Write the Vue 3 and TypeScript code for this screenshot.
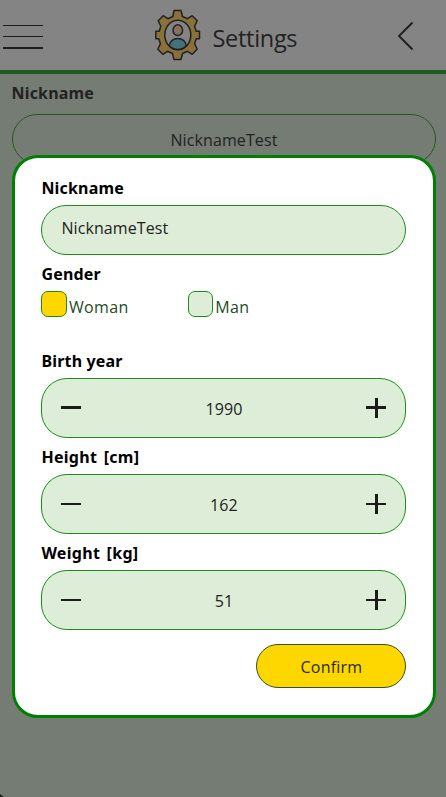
<script setup lang="ts">
import { ref } from 'vue'

interface Stepper {
  label: string
  value: number
  strokeTop: number
  stroke: number
}

const nickname = ref('NicknameTest')
const gender = ref<'Woman' | 'Man'>('Woman')
const genders = ['Woman', 'Man'] as const
const steppers = ref<Stepper[]>([
  { label: 'Birth year', value: 1990, strokeTop: 8, stroke: 3 },
  { label: 'Height [cm]', value: 162, strokeTop: 9, stroke: 2 },
  { label: 'Weight [kg]', value: 51, strokeTop: 9, stroke: 2 },
])
</script>

<template>
  <div class="page">
    <header class="bar">
      <svg class="menu" width="40" height="24" viewBox="0 0 40 24" shape-rendering="crispEdges">
        <rect width="40" height="1" />
        <rect y="11" width="40" height="1" />
        <rect y="22" width="40" height="2" />
      </svg>
      <div class="title">
        <svg class="gear" width="46" height="52" viewBox="0 0 46 52">
          <path
            d="M19 1.5h7l1.500 6 5 2.200 4.700-3 5 5-2.600 5.500 1.600 5h3.300v7.600h-3.300l-1.600 5 2.600 5.500-5 5-4.700-3-5 2.200-1.500 6h-7l-1.500-6-5-2.200-4.700 3-5-5 2.600-5.500-1.600-5H.8v-7.600h3.400l1.600-5-2.600-5.500 5-5 4.700 3 5-2.200z"
            class="cog"
          />
          <ellipse cx="22.8" cy="26" rx="13" ry="14.8" class="hole" />
          <ellipse cx="22.8" cy="21.2" rx="4.8" ry="5.4" class="head" />
          <path d="M14.2 36.6c1-4.6 4.200-7.200 8.600-7.200s7.600 2.600 8.600 7.200c-2.400 2.700-5.300 4-8.600 4s-6.200-1.300-8.600-4z" class="body" />
        </svg>
        <h1>Settings</h1>
      </div>
      <svg class="back" width="18" height="30" viewBox="0 0 18 30">
        <path d="M15.500 1.500 2 15l13.500 13.500" />
      </svg>
    </header>

    <main class="backdrop">
      <div class="label dim">Nickname</div>
      <div class="dim-field"><span class="nick">{{ nickname }}</span></div>
    </main>

    <section class="modal">
      <div class="label first">Nickname</div>
      <div class="field name"><span class="nick">{{ nickname }}</span></div>
      <div class="label">Gender</div>
      <div class="genders">
        <div v-for="g in genders" :key="g" class="option" @click="gender = g">
          <span class="check" :class="{ on: gender === g }"></span>
          <span class="option-text">{{ g }}</span>
        </div>
      </div>
      <template v-for="s in steppers" :key="s.label">
        <div class="label" :class="{ unit: s.label.includes('[') }">{{ s.label }}</div>
        <div class="field stepper">
          <svg width="20" height="20" viewBox="0 0 20 20" shape-rendering="crispEdges" @click="s.value--">
            <rect :y="s.strokeTop" width="20" :height="s.stroke" />
          </svg>
          <span class="value">{{ s.value }}</span>
          <svg width="20" height="20" viewBox="0 0 20 20" shape-rendering="crispEdges" @click="s.value++">
            <rect :y="s.strokeTop" width="20" :height="s.stroke" />
            <rect x="9" width="3" height="20" />
          </svg>
        </div>
      </template>
      <button class="confirm" type="button">Confirm</button>
    </section>
    <svg class="corner" width="4" height="4" viewBox="0 0 4 4"><path d="M0 1v3h4z" /></svg>
  </div>
</template>

<style>
body {
  margin: 0;
  overflow: hidden;
}
</style>

<style scoped>
.page {
  position: relative;
  box-sizing: border-box;
  width: 446px;
  height: 797px;
  overflow: hidden;
  background: #757c74;
  color: #222;
  font-family: "Open Sans", "Noto Sans", sans-serif;
  font-size: 16px;
}
.bar {
  box-sizing: border-box;
  display: flex;
  align-items: flex-start;
  justify-content: space-between;
  height: 74px;
  padding: 0 31px 0 3px;
  border-bottom: 4px solid #215a1f;
  background: #848484;
}
.menu {
  margin-top: 25px;
  fill: #1d1d1d;
}
.title {
  display: flex;
  align-items: flex-start;
  width: 145px;
  margin-left: 14px;
}
.gear {
  flex: none;
  margin-top: 9px;
}
.gear > * {
  stroke: #222;
  stroke-width: 1.5;
  stroke-linejoin: round;
}
.cog { fill: #89713a; }
.hole { fill: #848484; }
.head { fill: #876f60; }
.body { fill: #43727f; }
h1 {
  margin: 21px 0 0 12px;
  font-size: 23.500px;
  font-weight: 400;
  line-height: 34px;
  letter-spacing: -0.300px;
}
.back {
  margin-top: 21px;
  fill: none;
  stroke: #1c1c1c;
  stroke-width: 1.800;
}
.backdrop {
  padding: 2px 9.600px 0 11.500px;
}
.label {
  height: 34px;
  margin-top: 2.300px;
  color: #000;
  font-family: "Noto Sans", "Open Sans", sans-serif;
  font-weight: 700;
  line-height: 34px;
  letter-spacing: 0.180px;
}
.label.unit {
  letter-spacing: 0.300px;
  word-spacing: 2px;
}
.label.dim {
  height: 36px;
  color: #222;
  line-height: 31px;
}
.dim-field {
  box-sizing: border-box;
  height: 50px;
  border: 1px solid #215a1f;
  border-radius: 25px;
  text-align: center;
  line-height: 50px;
}
.nick {
  letter-spacing: 0.100px;
}
.modal {
  position: absolute;
  top: 155px;
  left: 12px;
  box-sizing: border-box;
  display: flex;
  flex-direction: column;
  width: 424.400px;
  height: 562.700px;
  padding: 13px 27px 0 26.400px;
  border: 3px solid #008000;
  border-radius: 26px;
  background: #fff;
}
.label.first {
  margin-top: 0;
}
.field {
  box-sizing: border-box;
  flex: none;
  border: 1px solid #188f18;
  border-radius: 26px;
  background: #ddedd8;
}
.name {
  height: 50px;
  padding-left: 19px;
  line-height: 45px;
}
.genders {
  display: flex;
  height: 50px;
}
.option {
  display: flex;
  width: 146.300px;
}
.check {
  box-sizing: border-box;
  width: 25.500px;
  height: 25.500px;
  border: 1px solid #188f18;
  border-radius: 7px;
  background: #ddedd8;
}
.check.on {
  background: #ffd700;
}
.option-text {
  margin-left: 2px;
  color: #244a24;
  line-height: 32px;
  letter-spacing: 0.350px;
}
.stepper {
  display: flex;
  align-items: center;
  justify-content: space-between;
  height: 60px;
  padding: 0 19px;
}
.stepper svg {
  fill: #1c1c1c;
}
.value {
  padding-top: 2px;
  letter-spacing: 0.100px;
}
.confirm {
  align-self: flex-end;
  box-sizing: border-box;
  width: 150px;
  height: 44px;
  margin-top: 14px;
  padding: 2px 0 0;
  border: 1px solid #315221;
  border-radius: 22px;
  background: #ffd700;
  color: #2a2a10;
  font: inherit;
  letter-spacing: 0.200px;
}
.corner {
  position: absolute;
  bottom: 0;
  left: 0;
  fill: #222;
}
</style>
